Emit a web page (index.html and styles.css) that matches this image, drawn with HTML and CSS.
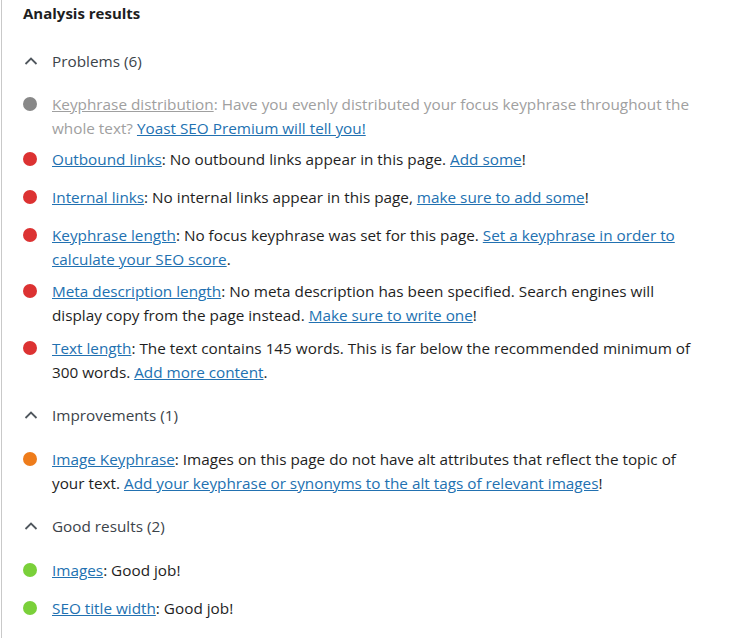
FILE: index.html
```html
<!DOCTYPE html>
<html lang="en">
<head>
<meta charset="utf-8">
<title>Analysis results</title>
<link rel="stylesheet" href="styles.css">
</head>
<body>
<div class="panel">
  <h2 class="title">Analysis results</h2>

  <section class="group">
    <div class="group-head">
      <svg class="chev" viewBox="0 0 14 8" width="14" height="8"><path d="M1.5 7 L7 1.5 L12.5 7" fill="none" stroke="#50575e" stroke-width="1.8"/></svg>
      <span>Problems (6)</span>
    </div>
    <ul class="list">
      <li class="item muted"><span class="dot gray"></span><p><a href="#" class="grey-link">Keyphrase distribution</a>: Have you evenly distributed your focus keyphrase throughout the whole text? <a href="#" class="premium">Yoast SEO Premium will tell you!</a></p></li>
      <li class="item"><span class="dot red"></span><p><a href="#">Outbound links</a>: No outbound links appear in this page. <a href="#">Add some</a>!</p></li>
      <li class="item"><span class="dot red"></span><p><a href="#">Internal links</a>: No internal links appear in this page, <a href="#">make sure to add some</a>!</p></li>
      <li class="item"><span class="dot red"></span><p><a href="#">Keyphrase length</a>: No focus keyphrase was set for this page. <a href="#">Set a keyphrase in order to calculate your SEO score</a>.</p></li>
      <li class="item tall"><span class="dot red"></span><p><a href="#">Meta description length</a>: No meta description has been specified. Search engines will display copy from the page instead. <a href="#">Make sure to write one</a>!</p></li>
      <li class="item"><span class="dot red"></span><p><a href="#">Text length</a>: The text contains 145 words. This is far below the recommended minimum of 300 words. <a href="#">Add more content</a>.</p></li>
    </ul>
  </section>

  <section class="group">
    <div class="group-head">
      <svg class="chev" viewBox="0 0 14 8" width="14" height="8"><path d="M1.5 7 L7 1.5 L12.5 7" fill="none" stroke="#50575e" stroke-width="1.8"/></svg>
      <span>Improvements (1)</span>
    </div>
    <ul class="list">
      <li class="item"><span class="dot orange"></span><p><a href="#">Image Keyphrase</a>: Images on this page do not have alt attributes that reflect the topic of your text. <a href="#">Add your keyphrase or synonyms to the alt tags of relevant images</a>!</p></li>
    </ul>
  </section>

  <section class="group">
    <div class="group-head">
      <svg class="chev" viewBox="0 0 14 8" width="14" height="8"><path d="M1.5 7 L7 1.5 L12.5 7" fill="none" stroke="#50575e" stroke-width="1.8"/></svg>
      <span>Good results (2)</span>
    </div>
    <ul class="list">
      <li class="item"><span class="dot green"></span><p><a href="#">Images</a>: Good job!</p></li>
      <li class="item"><span class="dot green"></span><p><a href="#">SEO title width</a>: Good job!</p></li>
    </ul>
  </section>
</div>
</body>
</html>
```

FILE: styles.css
```css
html, body {
  margin: 0;
  padding: 0;
  background: #ffffff;
}

body {
  font-family: "Open Sans", "Noto Sans", "Liberation Sans", sans-serif;
  font-size: 15.3px;
  color: #1e1e1e;
}

.panel {
  margin-left: 1px;
  border-left: 1px solid #c9c9c9;
  padding: 1px 45px 20px 21px;
  min-height: 640px;
  box-sizing: border-box;
}

.title {
  margin: 0 0 12px;
  font-size: 15px;
  font-weight: 700;
  line-height: 24px;
  color: #1e1e1e;
}

.group-head {
  display: flex;
  align-items: center;
  height: 24px;
  padding-top: 11px;
  margin-bottom: 20px;
  color: #3c434a;
}

.group:first-of-type .group-head {
  padding-top: 12px;
  margin-bottom: 19px;
}

.chev {
  width: 14px;
  margin-left: 1px;
  margin-right: 14px;
  flex: none;
}

.list {
  list-style: none;
  margin: 0;
  padding: 0;
}

.item {
  display: flex;
  align-items: flex-start;
  min-height: 30px;
  margin-bottom: 8px;
}

.item p {
  margin: 0;
  line-height: 24px;
  flex: 1;
}

.item.muted {
  margin-bottom: 7px;
}

.item.tall {
  margin-bottom: 9px;
}

.dot {
  flex: none;
  width: 14px;
  height: 14px;
  border-radius: 50%;
  margin-top: 5px;
  margin-right: 15px;
}

.dot.gray { background: #888888; }
.dot.red { background: #dc3232; }
.dot.orange { background: #ee7c1b; }
.dot.green { background: #7ad03a; }

a {
  color: #2271b1;
  text-decoration: underline;
}

.muted p {
  color: #a0a0a0;
}

.muted .grey-link {
  color: #a0a0a0;
}

.muted .premium {
  color: #2271b1;
}
```
